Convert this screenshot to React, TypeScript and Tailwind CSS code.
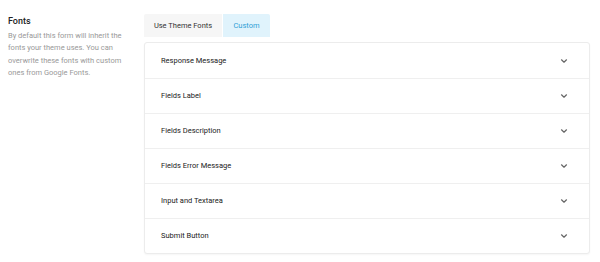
import React from "react";

const rows = [
  "Response Message",
  "Fields Label",
  "Fields Description",
  "Fields Error Message",
  "Input and Textarea",
  "Submit Button",
];

function Chevron() {
  return (
    <svg width="8" height="6" viewBox="0 0 8 6" fill="none" className="block">
      <path d="M1.5 1.8 L4 4.2 L6.5 1.8" stroke="#666" strokeWidth="1.2" strokeLinecap="round" strokeLinejoin="round" />
    </svg>
  );
}

export default function App() {
  return (
    <div
      className="w-[600px] h-[262px] bg-white flex"
      style={{ fontFamily: "Roboto, 'Noto Sans', sans-serif" }}
    >
      <div className="w-[144px] shrink-0 pl-[8px] pt-[15px]">
        <div className="text-[9px] font-medium text-[#222] leading-[12px]">Fonts</div>
        <p className="mt-[3px] w-[120px] text-[7.5px] leading-[12.3px] text-[#999]">
          By default this form will inherit the fonts your theme uses. You can overwrite these fonts with custom ones from Google Fonts.
        </p>
      </div>
      <div className="w-[446px] pt-[14px]">
        <div className="flex">
          <div className="w-[78px] h-[23px] bg-[#f6f6f6] rounded-tl-[2px] flex items-center justify-center text-[7.5px] text-[#333] font-normal">
            Use Theme Fonts
          </div>
          <div className="ml-[1px] w-[47px] h-[23px] bg-[#e0f3fc] rounded-tr-[2px] flex items-center justify-center text-[7.5px] text-[#2f9fd6] font-normal">
            Custom
          </div>
        </div>
        <div className="mt-[5px] border border-[#ececec] rounded-[3px] bg-white shadow-[0_1px_2px_rgba(0,0,0,0.04)]">
          {rows.map((r, i) => (
            <div
              key={r}
              className={`h-[35px] flex items-center justify-between pl-[16px] pr-[21px] ${i > 0 ? "border-t border-[#efefef]" : ""}`}
            >
              <span className="text-[7.5px] font-normal text-[#1a1a1a]">{r}</span>
              <Chevron />
            </div>
          ))}
        </div>
      </div>
    </div>
  );
}
